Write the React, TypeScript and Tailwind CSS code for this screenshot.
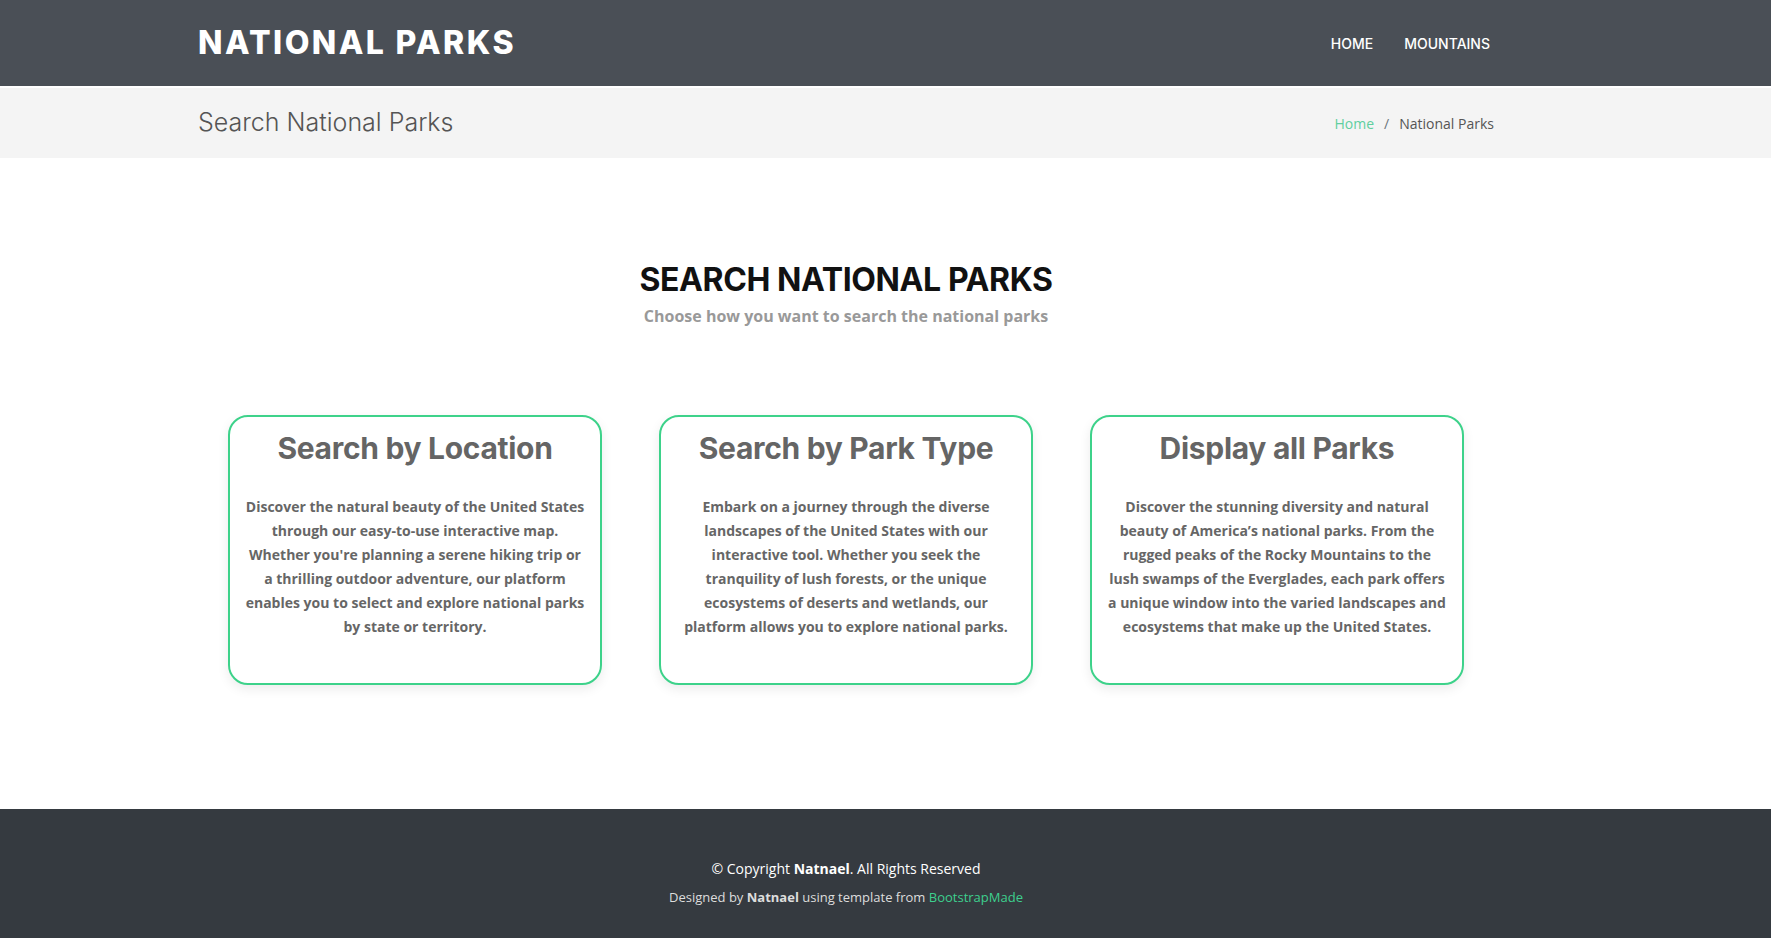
const poppins = "font-['Inter','Noto_Sans',sans-serif]";

const cards = [
  {
    title: 'Search by Location',
    text: "Discover the natural beauty of the United States through our easy-to-use interactive map. Whether you're planning a serene hiking trip or a thrilling outdoor adventure, our platform enables you to select and explore national parks by state or territory.",
  },
  {
    title: 'Search by Park Type',
    text: 'Embark on a journey through the diverse landscapes of the United States with our interactive tool. Whether you seek the tranquility of lush forests, or the unique ecosystems of deserts and wetlands, our platform allows you to explore national parks.',
  },
  {
    title: 'Display all Parks',
    text: 'Discover the stunning diversity and natural beauty of America\u2019s national parks. From the rugged peaks of the Rocky Mountains to the lush swamps of the Everglades, each park offers a unique window into the varied landscapes and ecosystems that make up the United States.',
  },
];

const Card = ({ title, text }: { title: string; text: string }) => (
  <div className="w-[374px] h-[270px] rounded-[20px] border-2 border-[#3dd28a] bg-white px-[15px] pt-[11px] shadow-[0_4px_12px_rgba(0,0,0,0.08)]">
    <h3 className={`${poppins} text-center text-[30px] font-bold leading-[40px] text-[#656565] tracking-[-0.3px]`}>
      {title}
    </h3>
    <p className="mt-[27px] text-center font-['Open_Sans',sans-serif] text-[14px] font-bold leading-[24px] text-[#666]">
      {text}
    </p>
  </div>
);

const App = () => {
  return (
    <div className="min-h-[939px] bg-white font-['Open_Sans',sans-serif]">
      <header className="h-[86px] bg-[#4a4f56]">
        <div className="ml-[186px] flex h-full w-[1320px] items-center justify-between px-3">
          <a className={`${poppins} text-[32px] font-extrabold tracking-[2.4px] text-white`}>NATIONAL PARKS</a>
          <nav className={`${poppins} flex gap-[31px] pr-[4px] text-[14px] font-medium text-white`}>
            <a>HOME</a>
            <a>MOUNTAINS</a>
          </nav>
        </div>
      </header>

      <div className="mt-[2px] h-[70px] bg-[#f4f4f4]">
        <div className="ml-[186px] flex h-full w-[1320px] items-center justify-between px-3">
          <h2 className={`${poppins} text-[25px] font-light text-[#555]`}>Search National Parks</h2>
          <ol className="flex items-center text-[14px] text-[#555]">
            <li className="text-[#5fcf9f]">Home</li>
            <li className="px-[10px] text-[#6c757d]">/</li>
            <li>National Parks</li>
          </ol>
        </div>
      </div>

      <main className="pt-[99px] pb-[124px]">
        <div className="ml-[186px] w-[1320px] px-3">
          <div className="text-center">
            <h2 className={`${poppins} text-[32px] font-bold leading-[46px] tracking-[-0.4px] text-[#111]`}>
              SEARCH NATIONAL PARKS
            </h2>
            <p className="mt-[1px] text-[16px] font-bold text-[#999]">
              Choose how you want to search the national parks
            </p>
          </div>
          <div className="mt-[87px] flex justify-center gap-[57px]">
            {cards.map((c) => (
              <Card key={c.title} title={c.title} text={c.text} />
            ))}
          </div>
        </div>
      </main>

      <footer className="h-[129px] bg-[#353a40] pt-[49px] text-center">
        <div className="pr-[79px]">
          <p className="text-[14px] text-white">
            © Copyright <strong>Natnael</strong>. All Rights Reserved
          </p>
          <p className="mt-[9px] text-[13px] text-[#ddd]">
            Designed by <strong>Natnael</strong> using template from{' '}
            <a className="text-[#3dcf8e]">BootstrapMade</a>
          </p>
        </div>
      </footer>
    </div>
  );
};

export default App;
